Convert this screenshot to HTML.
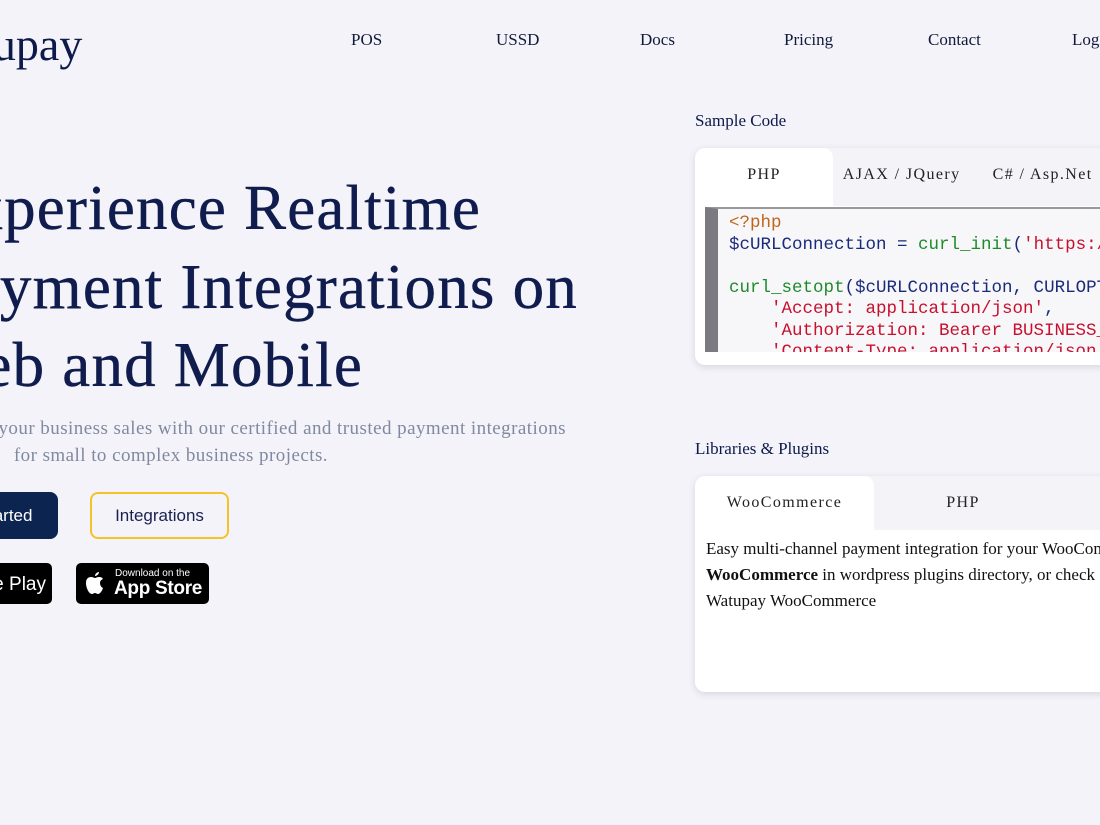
<!DOCTYPE html>
<html><head><meta charset="utf-8"><style>
*{margin:0;padding:0;box-sizing:border-box}
body{width:1100px;height:825px;overflow:hidden;background:#f3f3f9;font-family:"Liberation Serif",serif;color:#0d1a4a;position:relative}
.a{position:absolute;white-space:nowrap}
.nav{font-size:17px;top:30px;color:#111a3a}
.h{font-size:63px;color:#0f1c4d;text-align:right;letter-spacing:1.2px;-webkit-text-stroke:0.4px #0f1c4d}
.p{font-size:19px;color:#8089a0;text-align:right;letter-spacing:0.45px}
.card{position:absolute;left:695px;width:420px;background:#fff;border-radius:10px;box-shadow:0 2px 8px rgba(0,0,0,.12);overflow:hidden}
.tabs{display:flex;background:#f3f3f8;font-size:16px;letter-spacing:1.4px}
.tab{text-align:center;color:#222}
.tab.on{background:#fff;border-radius:10px 10px 0 0}
pre{font-family:"Liberation Mono",monospace;font-size:17.5px;line-height:21.5px;color:#1a2a7a}
</style></head><body>
<div class="a" style="left:-80px;top:18px;font-size:46px;color:#0d1a4a">Watupay</div>
<div class="a nav" style="left:351px">POS</div>
<div class="a nav" style="left:496px">USSD</div>
<div class="a nav" style="left:640px">Docs</div>
<div class="a nav" style="left:784px">Pricing</div>
<div class="a nav" style="left:928px">Contact</div>
<div class="a nav" style="left:1072px">Login</div>

<div class="a h" style="right:619px;top:172px">Experience Realtime</div>
<div class="a h" style="right:522px;top:251px">Payment Integrations on</div>
<div class="a h" style="right:737px;top:329px">Web and Mobile</div>
<div class="a p" style="right:534px;top:418px">Grow your business sales with our certified and trusted payment integrations</div>
<div class="a p" style="right:772px;top:445px">for small to complex business projects.</div>

<div class="a" style="left:-80px;top:492px;width:138px;height:47px;background:#0b2450;border-radius:8px;color:#fff;font-family:'Liberation Sans',sans-serif;font-size:17px;line-height:47px;text-align:center">Get Started</div>
<div class="a" style="left:90px;top:492px;width:139px;height:47px;border:2px solid #f6c324;border-radius:8px;color:#1a2050;font-family:'Liberation Sans',sans-serif;font-size:17px;line-height:43px;text-align:center">Integrations</div>
<div class="a" style="left:-90px;top:563px;width:142px;height:41px;background:#000;border-radius:5px;color:#fff;font-family:'Liberation Sans',sans-serif;font-size:19px;line-height:44px;text-align:right;padding-right:6px">Google Play</div>
<div class="a" style="left:76px;top:563px;width:133px;height:41px;background:#000;border-radius:5px;color:#fff;font-family:'Liberation Sans',sans-serif">
<svg style="position:absolute;left:8px;top:8px" width="22" height="25" viewBox="0 0 22 25"><path d="M15 6c-2 0-3 1-4 1s-2-1-4-1C4 6 2 8 2 12c0 5 3 11 6 11 1 0 2-1 3-1s2 1 3 1c2 0 4-3 5-6-2-1-3-3-3-5s1-3 3-4c-1-2-3-2-4-2zM11 5c0-2 2-4 4-4 0 2-2 4-4 4z" fill="#fff"/></svg>
<div class="a" style="left:39px;top:5px;font-size:10px">Download on the</div>
<div class="a" style="left:38px;top:15px;font-size:19px;font-weight:bold;letter-spacing:-.3px">App Store</div>
</div>

<div class="a" style="left:695px;top:111px;font-size:17px">Sample Code</div>
<div class="card" style="top:148px;height:217px">
<div class="tabs" style="height:58px"><div class="tab on" style="width:143px;line-height:54px">PHP</div><div class="tab" style="width:142px;line-height:54px">AJAX / JQuery</div><div class="tab" style="width:150px;line-height:54px">C# / Asp.Net</div></div>
<div style="position:absolute;left:10px;top:59px;width:420px;height:145px;background:#f7f7fa;border-left:13px solid #7a7a80;border-top:2px solid #999;overflow:hidden;padding:4px 0 0 11px">
<pre><span style="color:#c0661a">&lt;?php</span>
$cURLConnection = <span style="color:#1e8a2a">curl_init</span>(<span style="color:#c8102e">'https://</span>

<span style="color:#1e8a2a">curl_setopt</span>($cURLConnection, CURLOPT
<span style="color:#c8102e">    'Accept: application/json'</span>,
<span style="color:#c8102e">    'Authorization: Bearer BUSINESS_</span>
<span style="color:#c8102e">    'Content-Type: application/json</span></pre></div>
</div>

<div class="a" style="left:695px;top:439px;font-size:17px">Libraries &amp; Plugins</div>
<div class="card" style="top:476px;height:216px">
<div class="tabs" style="height:54px"><div class="tab on" style="width:179px;line-height:54px">WooCommerce</div><div class="tab" style="width:178px;line-height:54px">PHP</div></div>
<div style="padding:6px 0 0 11px;font-size:17px;line-height:26px;color:#111;white-space:nowrap">Easy multi-channel payment integration for your WooCommerce<br><b>WooCommerce</b> in wordpress plugins directory, or check<br>Watupay WooCommerce</div>
</div>
</body></html>
